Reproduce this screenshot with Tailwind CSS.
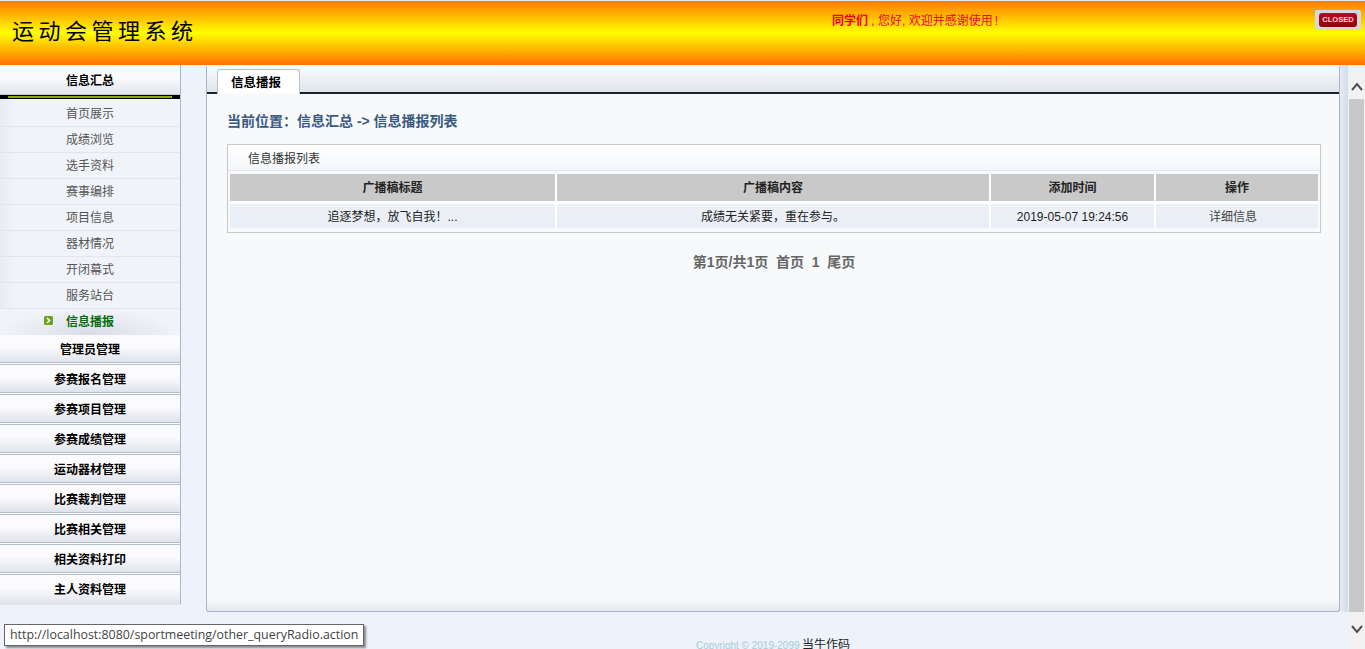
<!DOCTYPE html>
<html lang="zh">
<head>
    <title>运动会管理系统</title>
    <meta charset="UTF-8">
    <script src="https://cdn.jsdelivr.net/npm/@tailwindcss/browser@4"></script>
</head>
<body class="relative h-[649px] overflow-hidden flex flex-col bg-[#eef2fb] font-['Liberation_Sans','Noto_Sans_CJK_SC',sans-serif] text-[12px]">
<!-- Header -->
<header class="h-[65px] shrink-0 relative border-t border-[#e8e8e8] bg-[linear-gradient(#ff7b00,#ffff00_50%,#ff7000)]">
    <h1 class="pl-3 pt-[16px] text-[22px] leading-[30px] tracking-[4.5px] font-normal text-black">运动会管理系统</h1>
    <p class="absolute left-[832px] top-[12px] leading-4 text-[#f0003c]"><b class="text-[#e8002a]">同学们</b> , 您好, 欢迎并感谢使用<span class="ml-[2px]">!</span></p>
    <div class="absolute left-[1315px] top-[9px] w-[46px] h-[20px] px-[4px] py-[3px] rounded-[2px] bg-[#d8d8dc]">
        <div class="h-full rounded-[3px] bg-[linear-gradient(#b80c1c,#8a0610)] text-[#f4dcdc] text-[7.5px] font-bold leading-[14px] text-center">CLOSED</div>
    </div>
</header>

<div class="flex flex-1 min-h-0">
    <div class="w-[1348px] shrink-0 flex flex-col overflow-hidden">
        <div class="flex h-[547px] shrink-0">
            <!-- Sidebar -->
            <aside class="w-[181px] h-[539px] shrink-0 border-r border-b border-[#a9b8c8] bg-[linear-gradient(90deg,#e8ebf0,#f0f3f8_14px)]">
                <div class="h-[30px] text-center font-bold text-black leading-[33px] bg-[linear-gradient(#fbfbfd_45%,#e0e3ea)] border-b border-[#c4ccd6]">信息汇总</div>
                <div class="h-[4px] bg-black px-[8px] pt-[1px]"><div class="h-[2px] bg-[#8aab10]"></div></div>
                <ul class="pt-[2px] text-[#555] text-center">
                    <li class="h-[26px] leading-[27px] border-b border-[#e2e6ea]">首页展示</li>
                    <li class="h-[26px] leading-[27px] border-b border-[#e2e6ea]">成绩浏览</li>
                    <li class="h-[26px] leading-[27px] border-b border-[#e2e6ea]">选手资料</li>
                    <li class="h-[26px] leading-[27px] border-b border-[#e2e6ea]">赛事编排</li>
                    <li class="h-[26px] leading-[27px] border-b border-[#e2e6ea]">项目信息</li>
                    <li class="h-[26px] leading-[27px] border-b border-[#e2e6ea]">器材情况</li>
                    <li class="h-[26px] leading-[27px] border-b border-[#e2e6ea]">开闭幕式</li>
                    <li class="h-[26px] leading-[27px] border-b border-[#e2e6ea]">服务站台</li>
                    <li class="relative h-[26px] leading-[27px] font-bold text-[#0a6a10] bg-[radial-gradient(ellipse_at_center_bottom,#d9dde6,#f0f3f8_70%)]">
                        <svg class="absolute left-[44px] top-[7px]" width="9" height="9" viewBox="0 0 9 9"><rect width="9" height="9" rx="1.5" fill="#6ba21e"/><path d="M3 2l2.6 2.5L3 7" fill="none" stroke="#fff" stroke-width="1.5"/></svg>
                        信息播报
                    </li>
                </ul>
                <div class="h-[30px] text-center font-bold text-black leading-[31px] bg-[linear-gradient(#fbfbfd_45%,#dfe2e9)] border-b-[3px] border-double border-[#b4bfcc]">管理员管理</div>
                <div class="h-[30px] text-center font-bold text-black leading-[31px] bg-[linear-gradient(#fbfbfd_45%,#dfe2e9)] border-b-[3px] border-double border-[#b4bfcc]">参赛报名管理</div>
                <div class="h-[30px] text-center font-bold text-black leading-[31px] bg-[linear-gradient(#fbfbfd_45%,#dfe2e9)] border-b-[3px] border-double border-[#b4bfcc]">参赛项目管理</div>
                <div class="h-[30px] text-center font-bold text-black leading-[31px] bg-[linear-gradient(#fbfbfd_45%,#dfe2e9)] border-b-[3px] border-double border-[#b4bfcc]">参赛成绩管理</div>
                <div class="h-[30px] text-center font-bold text-black leading-[31px] bg-[linear-gradient(#fbfbfd_45%,#dfe2e9)] border-b-[3px] border-double border-[#b4bfcc]">运动器材管理</div>
                <div class="h-[30px] text-center font-bold text-black leading-[31px] bg-[linear-gradient(#fbfbfd_45%,#dfe2e9)] border-b-[3px] border-double border-[#b4bfcc]">比赛裁判管理</div>
                <div class="h-[30px] text-center font-bold text-black leading-[31px] bg-[linear-gradient(#fbfbfd_45%,#dfe2e9)] border-b-[3px] border-double border-[#b4bfcc]">比赛相关管理</div>
                <div class="h-[30px] text-center font-bold text-black leading-[31px] bg-[linear-gradient(#fbfbfd_45%,#dfe2e9)] border-b-[3px] border-double border-[#b4bfcc]">相关资料打印</div>
                <div class="h-[30px] text-center font-bold text-black leading-[31px] bg-[linear-gradient(#fbfbfd_45%,#dfe2e9)]">主人资料管理</div>
            </aside>

            <!-- Main panel -->
            <main class="ml-[25px] w-[1134px] h-[547px] shrink-0 border border-t-0 border-[#a5b5c6] rounded-[3px] bg-[linear-gradient(#f7f9fb_98%,#e4e8ec)] flex flex-col">
                <div class="h-[29px] shrink-0 flex items-end pl-[10px] border-b-2 border-[#15252f] bg-[linear-gradient(#fbfcfd,#dfe5eb)]">
                    <div class="w-[83px] h-[25px] -mb-[2px] pl-[13px] rounded-t-[3px] border border-b-0 border-[#b5c1cd] bg-white font-bold text-black text-[12.5px] leading-[27px]">信息播报</div>
                </div>
                <div class="pl-[20px] pr-[18px]">
                    <p class="mt-[18px] h-[18px] leading-[18px] text-[14px] font-bold text-[#3a5a80]">当前位置：信息汇总 -&gt; 信息播报列表</p>
                    <div class="mt-[14px] h-[89px] border border-[#c8c8c8] bg-[#f7f9fb]">
                        <div class="h-[26px] pl-[20px] leading-[29px] text-[#333] border-b border-[#e4e6ee] bg-[linear-gradient(#fff,#f4f6f9)]">信息播报列表</div>
                        <div class="w-fit ml-[2px] mt-[3px] bg-white grid grid-cols-[325px_432px_163px_162px] gap-x-[2px] gap-y-[3px] text-center text-[#222]">
                            <div class="h-[27px] leading-[29px] font-bold bg-[#c9c9c9]">广播稿标题</div>
                            <div class="h-[27px] leading-[29px] font-bold bg-[#c9c9c9]">广播稿内容</div>
                            <div class="h-[27px] leading-[29px] font-bold bg-[#c9c9c9]">添加时间</div>
                            <div class="h-[27px] leading-[29px] font-bold bg-[#c9c9c9]">操作</div>
                            <div class="h-[24px] leading-[26px] bg-[linear-gradient(#edf1f5,#e9eef7)]">追逐梦想，放飞自我！...</div>
                            <div class="h-[24px] leading-[26px] bg-[linear-gradient(#edf1f5,#e9eef7)]">成绩无关紧要，重在参与。</div>
                            <div class="h-[24px] leading-[26px] bg-[linear-gradient(#edf1f5,#e9eef7)]">2019-05-07 19:24:56</div>
                            <div class="h-[24px] leading-[26px] pr-[8px] text-[#444] bg-[linear-gradient(#edf1f5,#e9eef7)]">详细信息</div>
                        </div>
                    </div>
                    <p class="mt-[20px] text-center text-[14px] font-bold text-[#666] leading-[18px]">第1页/共1页&nbsp;&nbsp;首页&nbsp;&nbsp;1&nbsp;&nbsp;尾页</p>
                </div>
            </main>
            <div class="w-[8px] shrink-0 bg-[linear-gradient(90deg,#e6ebf3,#d5dbe7)]"></div>
        </div>

        <footer class="mt-[24px] pl-[696px] leading-[18px] whitespace-nowrap">
            <span class="text-[10px] text-[#a6cbd6]">Copyright © 2019-2099</span> <span class="-ml-[1px] text-[12px] text-[#222]">当牛作码</span>
        </footer>
    </div>

    <!-- Scrollbar -->
    <div class="w-[17px] shrink-0 flex flex-col bg-[#f1f1f1]">
        <div class="h-[34px] shrink-0 flex items-end justify-center pb-[8px]">
            <svg width="12" height="9" viewBox="0 0 12 9"><path d="M1 8l5-6 5 6" fill="none" stroke="#505050" stroke-width="2"/></svg>
        </div>
        <div class="h-[513px] mx-[1px] shrink-0 bg-[#c8c8c8]"></div>
        <div class="flex-1 flex items-start justify-center pt-[13px]">
            <svg width="12" height="9" viewBox="0 0 12 9"><path d="M1 1l5 6 5-6" fill="none" stroke="#505050" stroke-width="2"/></svg>
        </div>
    </div>
</div>

<!-- Status bubble -->
<div class="absolute left-[4px] top-[624px] h-[22px] px-[5px] leading-[20px] text-[12.4px] text-[#444] font-['Open_Sans','Liberation_Sans',sans-serif] bg-white border border-[#666] shadow-[2px_2px_2px_#888] whitespace-nowrap">http://localhost:8080/sportmeeting/other_queryRadio.action</div>
</body>
</html>
